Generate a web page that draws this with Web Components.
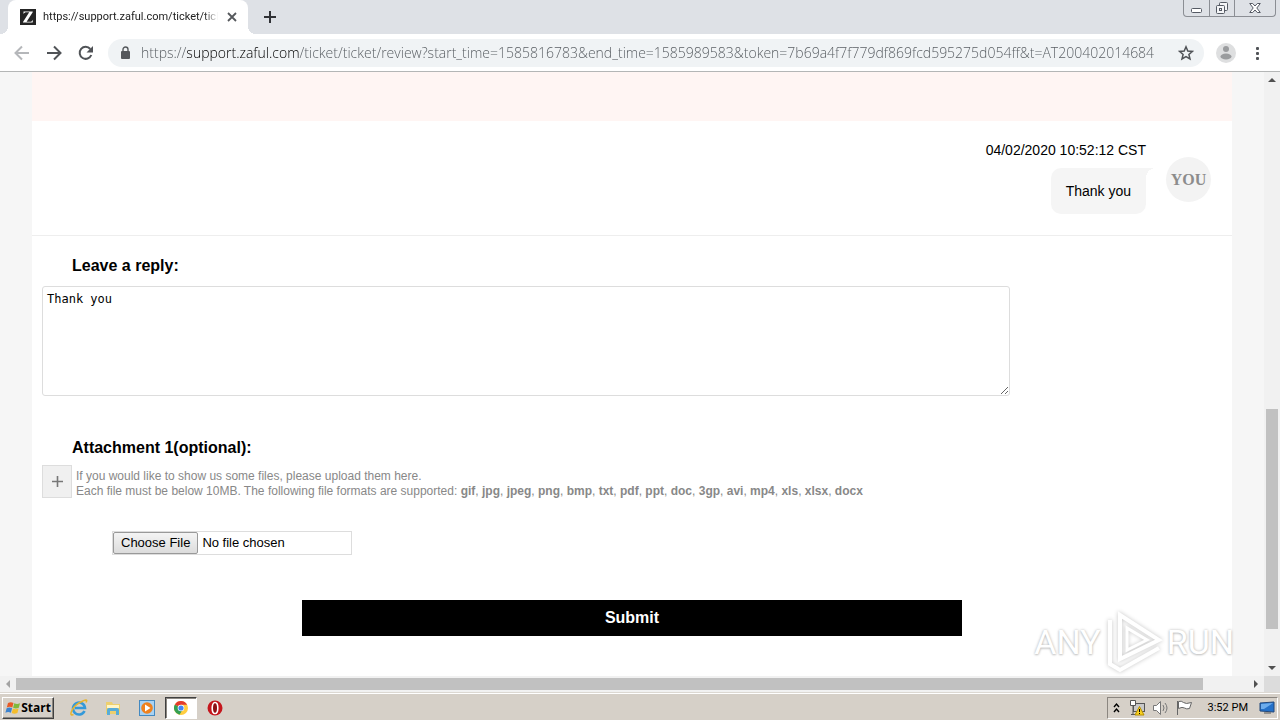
<!DOCTYPE html>
<html lang="en">
<head>
<meta charset="utf-8">
<title>Support ticket</title>
<style>
html,body{margin:0;height:100%}
body{font-family:"Liberation Sans",Arial,sans-serif;background:#fff;overflow:hidden}
</style>
</head>
<body>
<desktop-screen>
  <browser-tabs slot="tabs">https://support.zaful.com/ticket/ticket/review</browser-tabs>
  <browser-toolbar slot="toolbar"></browser-toolbar>
  <ticket-page slot="page">
    <ticket-message time="04/02/2020 10:52:12 CST" author="YOU">Thank you</ticket-message>
    <reply-form></reply-form>
  </ticket-page>
  <scroll-bar slot="vbar" direction="vertical" before="321" size="220" after="31"></scroll-bar>
  <scroll-bar slot="hbar" direction="horizontal" before="0" size="1187" after="45" at-start></scroll-bar>
  <any-run slot="mark"></any-run>
  <task-bar slot="taskbar"></task-bar>
</desktop-screen>
<script>
const define = (name, html, setup) => customElements.define(name, class extends HTMLElement {
  constructor() {
    super();
    this.attachShadow({mode: 'open'}).innerHTML = '<style>:host,*{box-sizing:border-box}</style>' + html;
  }
  connectedCallback() { if (setup) setup(this, this.shadowRoot); }
});

define('desktop-screen', `
<style>
:host{display:flex;flex-direction:column;height:100vh;position:relative}
.view{flex:1;min-height:0;display:grid;grid-template-columns:minmax(0,1fr) 16px;grid-template-rows:minmax(0,1fr) 16px}
.corner{background:#dcdcdc}
slot[name=page]::slotted(*){overflow:hidden}
</style>
<slot name="tabs"></slot><slot name="toolbar"></slot>
<div class="view"><slot name="page"></slot><slot name="vbar"></slot><slot name="hbar"></slot><div class="corner"></div></div>
<slot name="taskbar"></slot><slot name="mark"></slot>`);

define('browser-tabs', `
<style>
:host{display:flex;height:34px;background:#dee1e6;padding-left:8px;align-items:stretch}
button{border:0;background:none;padding:0;display:flex;align-items:center;justify-content:center}
.tab{position:relative;display:flex;align-items:center;width:240px;background:#fff;border-radius:8px 8px 0 0;padding:0 8px 0 12px}
.tab::before,.tab::after{content:"";position:absolute;bottom:0;width:8px;height:8px}
.tab::before{left:-8px;background:radial-gradient(circle at 0 0,#dee1e6 8px,#fff 8px)}
.tab::after{right:-8px;background:radial-gradient(circle at 100% 0,#dee1e6 8px,#fff 8px)}
.fav{flex:none;margin-right:7px}
.title{flex:1;min-width:0;overflow:hidden;white-space:nowrap;font:11px/16px Roboto,sans-serif;color:#222;-webkit-mask-image:linear-gradient(90deg,#000 92%,transparent);mask-image:linear-gradient(90deg,#000 92%,transparent)}
.close{width:16px;height:16px;margin-left:6px}
.new{width:28px;margin-left:8px}
.win{margin-left:auto;margin-right:4px;display:flex;height:17px;border:1px solid #8b8e94;border-top:0;border-radius:0 0 4px 4px}
.win button{width:25px}
.win button+button{border-left:1px solid #8b8e94}
.win button:last-child{width:41px}
</style>
<div class="tab">
 <svg class="fav" width="16" height="16" viewBox="0 0 16 16"><rect width="16" height="16" fill="#252525"/><path d="M3.500 5V2.500h9.200v.8L6.600 12.800h3.200c1.700 0 2.600-.8 3.300-2.400l-.5 3.200H3v-.7l6.200-9.600H6.600C5 3.300 4.200 3.900 3.500 5z" fill="#fff"/></svg>
 <span class="title"><slot></slot></span>
 <button class="close" aria-label="Close tab"><svg width="10" height="10"><path d="M1 1l8 8M9 1l-8 8" stroke="#55585c" stroke-width="1.800"/></svg></button>
</div>
<button class="new" aria-label="New tab"><svg width="12" height="12"><path d="M6 0v12M0 6h12" stroke="#303236" stroke-width="2"/></svg></button>
<div class="win">
 <button aria-label="Minimize"><svg width="13" height="16"><rect x="1.500" y="8.500" width="10" height="4" rx="1" fill="#fff" stroke="#555a64"/></svg></button>
 <button aria-label="Restore"><svg width="14" height="16" fill="#f4f5f7" stroke="#555a64"><rect x="4.500" y="2.500" width="8" height="8" rx="1"/><rect x="1.500" y="5.500" width="8" height="8" rx="1"/><rect x="4.500" y="8.500" width="2" height="2"/></svg></button>
 <button aria-label="Close"><svg width="12" height="16"><path d="M.7 3.500h3L6 6l2.300-2.500h3L7.800 8l3.500 4.500h-3L6 10l-2.300 2.500h-3L4.200 8z" fill="#fff" stroke="#555a64"/></svg></button>
</div>`);

define('browser-toolbar', `
<style>
:host{display:flex;align-items:center;height:38px;background:#fff;border-bottom:1px solid #b4b6b6;padding:0 12px}
button{border:0;background:none;padding:0;flex:none;width:20px;height:20px;display:flex;align-items:center;justify-content:center}
.nav{display:flex;gap:12px;margin-right:12px}
.omni{flex:1;min-width:0;display:flex;align-items:center;height:28px;border-radius:14px;background:#f0f3f5;padding:0 8px 0 12px}
.lock{flex:none;margin-right:10px}
input{flex:1;min-width:0;border:0;outline:0;padding:0;height:22px;font:300 14px/22px "Open Sans",sans-serif;color:#54595e;-webkit-text-fill-color:transparent;background:linear-gradient(90deg,#54595e 46px,#000 46px,#000 158px,#54595e 158px);-webkit-background-clip:text;background-clip:text}
.me{margin:0 12px}
</style>
<div class="nav">
 <button aria-label="Back"><svg width="16" height="16" fill="none" stroke="#b5b7ba" stroke-width="2"><path d="M15 8H2M8 1.500L1.500 8 8 14.500"/></svg></button>
 <button aria-label="Forward"><svg width="16" height="16" fill="none" stroke="#505357" stroke-width="2"><path d="M1 8h13M8 1.500L14.500 8 8 14.500"/></svg></button>
 <button aria-label="Reload"><svg width="16" height="16"><path d="M13.300 10A6 6 0 1 1 12.300 4" fill="none" stroke="#505357" stroke-width="2"/><path d="M15 1v6.500H8.500z" fill="#505357"/></svg></button>
</div>
<div class="omni">
 <svg class="lock" width="11" height="14"><rect x="1" y="5" width="9" height="8" rx="1" fill="#55585c"/><path d="M3 6V3.500a2.500 2.500 0 0 1 5 0V6" fill="none" stroke="#55585c" stroke-width="1.400"/></svg>
 <input aria-label="Address" value="https://support.zaful.com/ticket/ticket/review?start_time=1585816783&amp;end_time=1585989583&amp;token=7b69a4f7f779df869fcd595275d054ff&amp;t=AT200402014684">
 <button aria-label="Bookmark"><svg width="16" height="16"><path d="M8 1.800l1.800 4.200 4.600.4-3.500 3 1.100 4.500L8 11.500l-4 2.400 1.100-4.500-3.500-3 4.600-.4z" fill="none" stroke="#505357" stroke-width="1.500"/></svg></button>
</div>
<button class="me" aria-label="Profile"><svg width="20" height="20"><circle cx="10" cy="10" r="10" fill="#dedfe0"/><circle cx="10" cy="6" r="3" fill="#9a9c9e"/><ellipse cx="10" cy="13.500" rx="5.500" ry="3" fill="#9a9c9e"/></svg></button>
<button aria-label="Menu"><svg width="4" height="14" fill="#505357"><rect y="1" width="3" height="3" rx="1"/><rect y="6" width="3" height="3" rx="1"/><rect y="11" width="3" height="3" rx="1"/></svg></button>`);

define('ticket-page', `
<style>
:host{display:block;background:#f6f6f6;padding:0 32px;color:#000}
main{background:#fff;min-height:100%}
.notice{height:49px;background:#fff5f3}
</style>
<main><div class="notice"></div><slot></slot></main>`);

define('ticket-message', `
<style>
:host{display:flex;justify-content:flex-end;gap:20px;padding:20px 21px 21px;border-bottom:1px solid #eee;font-size:14px}
.body{display:flex;flex-direction:column;align-items:flex-end;gap:9px}
time{line-height:18px}
.bubble{position:relative;background:#f5f5f5;border-radius:10px 0 10px 10px;padding:15px;line-height:16px}
.bubble::after{content:"";position:absolute;left:100%;top:0;width:10px;height:10px;background:radial-gradient(circle at 100% 100%,transparent 10px,#f5f5f5 10px)}
.avatar{margin-top:16px;width:45px;height:45px;border-radius:50%;background:#f3f3f3;color:#8c8c8c;font:bold 16px/45px "Liberation Serif",serif;text-align:center}
</style>
<div class="body"><time></time><div class="bubble"><slot></slot></div></div><div class="avatar"></div>`,
(el, root) => {
  root.querySelector('time').textContent = el.getAttribute('time');
  root.querySelector('.avatar').textContent = el.getAttribute('author');
});

define('reply-form', `
<style>
:host{display:block;padding:20px 10px}
.label{display:block;margin-left:30px;font-size:16px;font-weight:bold;line-height:20px}
textarea{display:block;width:82%;height:110px;margin:10px 0 42px;padding:5px 4px;border:1px solid #ddd;border-radius:3px;font:12px/14px "DejaVu Sans Mono",monospace;color:#000;outline:0;resize:vertical}
.row{display:flex;gap:4px;margin-top:7px}
.add{flex:none;width:30px;height:33px;padding:0;border:1px solid #ddd;background:#f0f0f0;display:flex;align-items:center;justify-content:center}
p{margin:4px 0 0;font-size:12px;line-height:15px;color:#888}
.file{display:block;width:240px;height:24px;margin:32px 0 45px 70px;border:1px solid #ddd;font:13px/20px "Liberation Sans",Arial,sans-serif;color:#000}
.file::file-selector-button{height:22px;padding:0 7px;margin:0 4px 0 0;border:1px solid #999;border-radius:2px;background:linear-gradient(#f4f4f4,#dcdcdc);font:13px/20px "Liberation Sans",Arial,sans-serif;color:#000}
.submit{display:block;width:56%;height:36px;margin:0 auto;border:0;background:#000;color:#fff;font:bold 16px/20px "Liberation Sans",Arial,sans-serif}
</style>
<form>
<label class="label" for="reply">Leave a reply:</label>
<textarea id="reply">Thank you</textarea>
<label class="label" for="file">Attachment 1(optional):</label>
<div class="row"><button type="button" class="add" aria-label="Add attachment"><svg width="11" height="11"><path d="M5.500 0v11M0 5.500h11" stroke="#777" stroke-width="1.600"/></svg></button>
<p>If you would like to show us some files, please upload them here.<br>Each file must be below 10MB. The following file formats are supported: <b>gif</b>, <b>jpg</b>, <b>jpeg</b>, <b>png</b>, <b>bmp</b>, <b>txt</b>, <b>pdf</b>, <b>ppt</b>, <b>doc</b>, <b>3gp</b>, <b>avi</b>, <b>mp4</b>, <b>xls</b>, <b>xlsx</b>, <b>docx</b></p></div>
<input class="file" id="file" type="file">
<button type="button" class="submit">Submit</button>
</form>`);

define('scroll-bar', `
<style>
:host{display:flex;background:#f1f1f1}
:host([direction=vertical]){flex-direction:column}
svg{flex:none;fill:#505050}
:host([direction=vertical]) svg{transform:rotate(90deg)}
:host([at-start]) svg:first-of-type{fill:#a3a3a3}
.thumb{background:#c1c1c1;margin:2px 0}
:host([direction=vertical]) .thumb{margin:0 2px}
</style>
<svg width="16" height="16"><path d="M6 8l4-4v8z"/></svg><div class="before"></div><div class="thumb"></div><div class="after"></div><svg width="16" height="16"><path d="M10 8L6 4v8z"/></svg>`,
(el, root) => {
  for (const [cls, attr] of [['before','before'],['thumb','size'],['after','after']])
    root.querySelector('.' + cls).style.flex = el.getAttribute(attr) + ' 1 0';
});

define('any-run', `
<style>
:host{position:absolute;right:46px;bottom:46px;display:flex;align-items:center;gap:4px;pointer-events:none;font:34px/64px Roboto,sans-serif;color:#fff;text-shadow:0 0 3px #bbb,0 1px 2px #ccc}
svg{filter:drop-shadow(0 0 2px #c4c4c4)}
</style>
<span>ANY</span>
<svg width="58" height="64" fill="none" stroke="#fff" stroke-width="4"><path d="M15 5v44L54 30z"/><path d="M22 18v22l20-10z" stroke-width="3"/><path d="M5 10v44l10 6 39-22"/></svg>
<span>RUN</span>`);

define('task-bar', `
<style>
:host{display:flex;align-items:center;height:28px;background:#d6d0c8;border-top:1px solid #dcd8d2;box-shadow:inset 0 1px #fff;padding:2px 2px 0;color:#000}
button{border:0;background:none;padding:0;width:34px;height:22px;display:flex;align-items:center;justify-content:center}
.start{width:52px;margin-right:8px;background:#d6d0c8;border:1px solid;border-color:#fff #404040 #404040 #fff;box-shadow:inset -1px -1px #8b8680;font:bold 12px/14px "Open Sans",sans-serif}
.on{width:32px;margin:0 1px;background:#fff;border:1px solid;border-color:#404040 #fff #fff #404040;box-shadow:inset 1px 1px #8b8680}
.tray{margin-left:auto;display:flex;align-items:center;gap:6px;height:22px;padding:0 2px 0 4px;border:1px solid;border-color:#8b8680 #fff #fff #8b8680}
.tray svg{flex:none}
.clock{font:11px/14px Roboto,sans-serif;margin:0 5px 0 8px}
</style>
<button class="start"><svg width="16" height="16"><path d="M3 3c2-1 3.500-1 5.500 0L7.300 7.500c-2-1-3.500-1-5.500 0z" fill="#e85a26"/><path d="M9.300 3.300c2 1 3.500 1 5.700 0l-1.200 4.500c-2 1-3.700 1-5.700 0z" fill="#80b93a"/><path d="M1.600 8.300c2-1 3.500-1 5.500 0L5.900 12.800c-2-1-3.500-1-5.500 0z" fill="#3d83cf"/><path d="M7.900 8.600c2 1 3.500 1 5.700 0l-1.200 4.500c-2 1-3.700 1-5.700 0z" fill="#f5bd2b"/></svg>Start</button>
<button aria-label="Internet Explorer"><svg width="18" height="18" fill="none"><path d="M14.500 12A6 6 0 1 1 15 9H5" stroke="#3499d9" stroke-width="2.600"/><path d="M3.500 15.500C-2 18 2 8 9 4s9-4 7-.5" stroke="#e8b42d" stroke-width="1.500"/></svg></button>
<button aria-label="Explorer"><svg width="18" height="18"><path d="M2 3h6l1 2h7v10H2z" fill="#edcf6e"/><path d="M3 6h12v3H3z" fill="#fff5c6"/><path d="M3 16v-5q0-2 2-2h8q2 0 2 2v5h-3v-4H6v4z" fill="#58acd8"/></svg></button>
<button aria-label="Media Player"><svg width="16" height="16"><rect x=".5" y=".5" width="15" height="15" fill="#a8d2f3" stroke="#4389c1"/><circle cx="8" cy="8" r="5.800" fill="#ef811d"/><path d="M6 4.500v7L11.500 8z" fill="#fff"/></svg></button>
<button class="on" aria-label="Chrome"><svg width="14" height="14"><circle cx="7" cy="7" r="7" fill="#ffcd40"/><path d="M7 7L.9 3.500A7 7 0 0 0 5.500 13.800L9 8z" fill="#34a053"/><path d="M7 7L.9 3.500A7 7 0 0 1 13.100 3.800H7z" fill="#e33b2e"/><circle cx="7" cy="7" r="3.300" fill="#fff"/><circle cx="7" cy="7" r="2.600" fill="#4285f4"/></svg></button>
<button aria-label="Opera"><svg width="16" height="16"><circle cx="8" cy="8" r="7.500" fill="#c5161d"/><ellipse cx="8" cy="8" rx="2.800" ry="5.500" fill="#8d1015" stroke="#fff" stroke-width="1.600"/></svg></button>
<div class="tray">
 <svg width="10" height="12" fill="none" stroke="#000" stroke-width="1.400"><path d="M2 5l2.500-3L7 5M2 10l2.500-3L7 10"/></svg>
 <svg width="18" height="18"><rect x="5.500" y="4.500" width="11" height="8" fill="#c8c8c8" stroke="#555"/><path d="M2.500 1.500h5v5h-5zM5 6.500v9M3 15.500h5" fill="#fff" stroke="#555"/><path d="M11.500 7.500L16 16H7z" fill="#f8d020" stroke="#b58e00"/><path d="M11.500 10v3M11.500 14v1" stroke="#000"/></svg>
 <svg width="18" height="16" fill="none" stroke="#777"><path d="M1.500 5.500h3l4-4v13l-4-4h-3z" fill="#fff"/><path d="M11 5q2 3 0 6M13 3q4 5 0 10"/></svg>
 <svg width="18" height="16" fill="#fff" stroke="#666"><path d="M1.500 1v14M2.500 1.500q3-1 5 1t8 0l-2 6q-3 1-5-.5t-6 .5z"/></svg>
 <span class="clock">3:52 PM</span>
 <svg width="16" height="14"><path d="M1 2l14-1v10L1 10z" fill="#2471c9" stroke="#23487a"/><path d="M2 3l12-1-9 6H2z" fill="#6cacec"/><path d="M5 12h7" stroke="#555"/></svg>
</div>`);
</script>
</body>
</html>
